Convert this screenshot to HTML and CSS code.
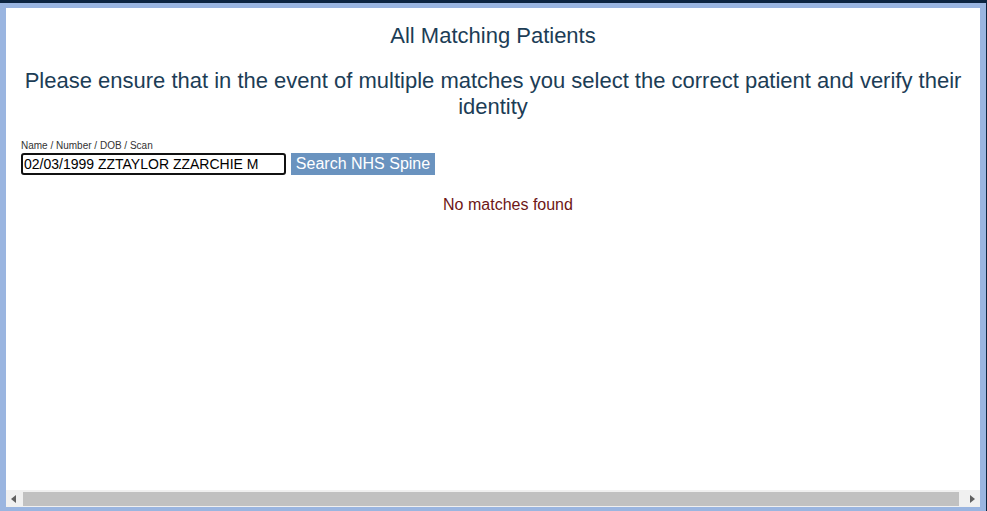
FILE: index.html
```html
<!DOCTYPE html>
<html lang="en">
<head>
  <meta charset="UTF-8">
  <meta name="viewport" content="width=device-width, initial-scale=1.0">
  <title>All Matching Patients</title>
  <link rel="stylesheet" href="styles.css">
</head>
<body>
  <div class="frame">
    <div class="page">
      <h1>All Matching Patients</h1>
      <h2>Please ensure that in the event of multiple matches you select the correct patient and verify their identity</h2>
      <div class="search">
        <label for="query">Name / Number / DOB / Scan</label>
        <div class="search-row">
          <input id="query" type="text" value="02/03/1999 ZZTAYLOR ZZARCHIE M">
          <button id="search-btn">Search NHS Spine</button>
        </div>
      </div>
      <p class="no-results">No matches found</p>
    </div>
    <div class="hscroll">
      <span class="arrow">
        <svg width="6" height="8" viewBox="0 0 6 8"><path d="M5 0 L0 4 L5 8 Z" fill="#606060"/></svg>
      </span>
      <div class="thumb"></div>
      <span class="arrow">
        <svg width="6" height="8" viewBox="0 0 6 8"><path d="M1 0 L6 4 L1 8 Z" fill="#606060"/></svg>
      </span>
    </div>
  </div>
</body>
</html>
```

FILE: styles.css
```css
html, body {
  margin: 0;
  padding: 0;
  height: 100%;
}

body {
  font-family: "Liberation Sans", Arial, sans-serif;
  background-color: #0c2440;
  overflow: hidden;
}

.frame {
  margin: 3px 1px 0 0;
  height: 508px;
  box-sizing: border-box;
  padding: 5px 6px 4px 6px;
  background-color: #9ab5e0;
  display: flex;
  flex-direction: column;
}

.page {
  flex: 1;
  background: white;
  padding: 16px 15px 0 15px;
  overflow: hidden;
}

h1 {
  margin: 0;
  font-size: 22px;
  line-height: 24px;
  font-weight: normal;
  text-align: center;
  color: #1c3d56;
}

h2 {
  margin: 20px 0 0 0;
  font-size: 22px;
  line-height: 26px;
  font-weight: normal;
  text-align: center;
  color: #1c3d56;
}

.search {
  margin-top: 20px;
}

.search label {
  display: block;
  font-size: 10px;
  line-height: 11px;
  color: #333;
  margin-bottom: 2px;
}

.search-row {
  display: flex;
  gap: 5px;
  align-items: stretch;
}

.search-row input {
  width: 265px;
  height: 22px;
  box-sizing: border-box;
  margin: 0;
  padding: 0 1px;
  border: 2px solid #111;
  border-radius: 3px;
  font-family: "Liberation Sans", Arial, sans-serif;
  font-size: 14px;
  color: #000;
  outline: none;
}

.search-row button {
  width: 144px;
  height: 22px;
  margin: 0;
  padding: 0;
  border: none;
  background-color: #6a93bf;
  color: white;
  font-family: "Liberation Sans", Arial, sans-serif;
  font-size: 16px;
}

.no-results {
  margin: 20px 0 0 0;
  padding-left: 30px;
  text-align: center;
  font-size: 16px;
  line-height: 20px;
  color: #6e1616;
}

.hscroll {
  height: 17px;
  background-color: #f0f0f0;
  display: flex;
  align-items: stretch;
}

.hscroll .arrow {
  width: 16px;
  display: flex;
  align-items: center;
  justify-content: center;
}

.hscroll .thumb {
  flex: 1;
  margin: 2px 5px 1px 1px;
  background-color: #c1c1c1;
}
```
